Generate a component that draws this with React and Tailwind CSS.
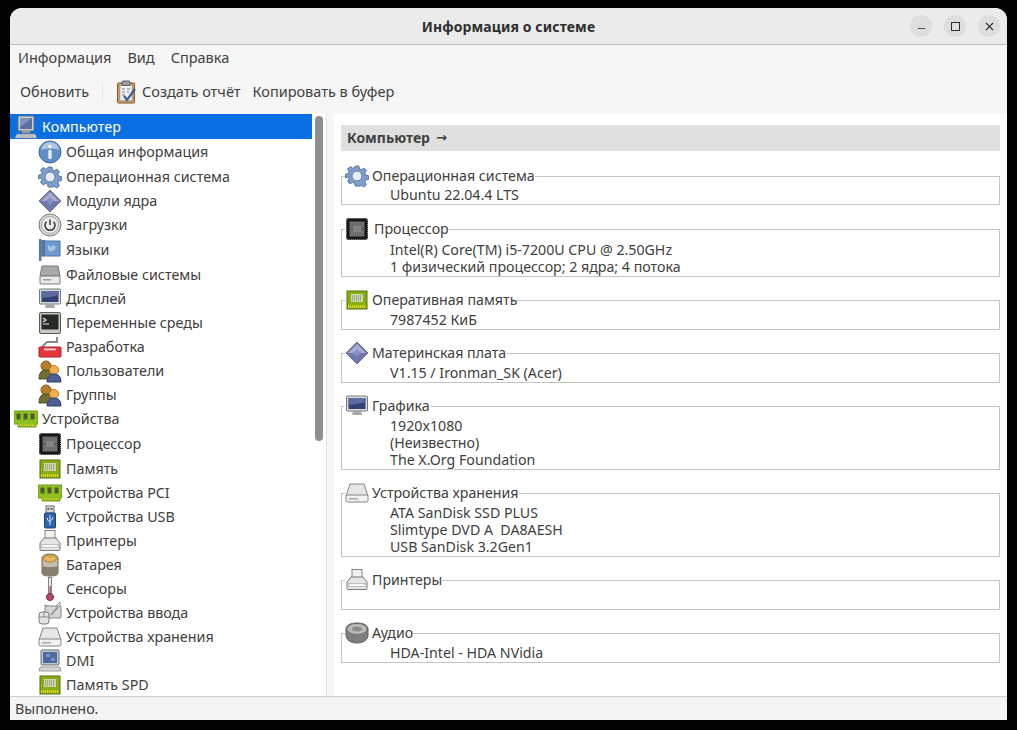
import { Minus, X } from "lucide-react";

const Computer = () => (
  <svg viewBox="0 0 24 24" className="w-6 h-6">
    <rect x="4" y="1" width="16" height="15" rx="1" fill="#c9ccd0" stroke="#6b6f73" />
    <rect x="6" y="3" width="12" height="11" fill="#5b6f9e" />
    <path d="M6 3h12L6 12z" fill="#8093bd" />
    <rect x="8" y="16" width="8" height="2" fill="#9a9d9f" />
    <path d="M3 19h18l2 4H1z" fill="#d6d7d3" stroke="#85878a" strokeWidth=".8" />
    <path d="M4 21h16" stroke="#9a9c9e" strokeWidth=".8" />
  </svg>
);

const Info = () => (
  <svg viewBox="0 0 24 24" className="w-6 h-6">
    <circle cx="12" cy="12" r="11" fill="#5f8ec4" stroke="#3e6a9f" />
    <path d="M3 10a9 8 0 0 1 18 0c-5-2-13-2-18 0z" fill="#a9c6e4" />
    <circle cx="12" cy="6.5" r="2" fill="#e8eff7" />
    <rect x="10.3" y="10" width="3.4" height="9" rx="1" fill="#e8eff7" />
  </svg>
);

const Gear = () => (
  <svg viewBox="0 0 24 24" className="w-6 h-6">
    <path
      d="M10 1h4l.7 3.2 2.1.9 2.8-1.800 2.800 2.800-1.800 2.800.9 2.100 3.200.7v4l-3.200.7-.9 2.100 1.800 2.800-2.800 2.800-2.800-1.800-2.100.9L14 23h-4l-.7-3.200-2.100-.9-2.800 1.800-2.800-2.800 1.800-2.800-.9-2.100L-.700 14v-4l3.200-.7.9-2.100-1.800-2.800 2.800-2.800 2.800 1.800 2.100-.9z"
      transform="translate(1.100 1.100) scale(.91)"
      fill="#7f9fcb"
      stroke="#4c6d9d"
    />
    <circle cx="12" cy="12" r="5" fill="#e9eef5" stroke="#5f7ca8" />
  </svg>
);

const Diamond = () => (
  <svg viewBox="0 0 24 24" className="w-6 h-6">
    <path d="M12 1l11 11-11 11L1 12z" fill="#6f78ae" stroke="#73767f" />
    <path d="M12 3l9 9H3z" fill="#a6acd2" />
    <path d="M12 8l4 4-4 4-4-4z" fill="#8890c0" />
  </svg>
);

const Power = () => (
  <svg viewBox="0 0 24 24" className="w-6 h-6">
    <circle cx="12" cy="12" r="11" fill="#d8d8d6" stroke="#77787a" />
    <circle cx="12" cy="12" r="8.500" fill="#ececea" stroke="#a5a6a6" />
    <path d="M8.500 8.800a5 5 0 1 0 7 0" fill="none" stroke="#333" strokeWidth="1.500" />
    <path d="M12 6.500v5.500" stroke="#333" strokeWidth="1.500" />
  </svg>
);

const Flag = () => (
  <svg viewBox="0 0 24 24" className="w-6 h-6">
    <rect x="1" y="1" width="2.500" height="22" fill="#5c7da5" />
    <path d="M3 3h19v15H3z" fill="#6f9ad0" stroke="#4f7098" />
    <path d="M4 2h3v16H4z" fill="#50749f" />
    <path d="M10 7l3 2 3-2 2 3-3 3-3 1-2-3z" fill="#a7c4e6" />
  </svg>
);

const Drive = () => (
  <svg viewBox="0 0 24 24" className="w-6 h-6">
    <path d="M4 3h16l2 10H2z" fill="#a9a9a7" stroke="#77787a" />
    <rect x="2" y="13" width="20" height="8" rx="1" fill="#e9e9e7" stroke="#77787a" />
    <rect x="5" y="16" width="8" height="1.500" fill="#9a9a98" />
  </svg>
);

const Storage = () => (
  <svg viewBox="0 0 24 24" className="w-6 h-6">
    <path d="M5 3h14l4 12H1z" fill="#e6e6e4" stroke="#85868a" />
    <rect x="1" y="14" width="22" height="7" rx="1.500" fill="#f1f1ef" stroke="#85868a" />
    <rect x="4" y="17" width="9" height="1.500" fill="#a9a9a7" />
  </svg>
);

const Display = () => (
  <svg viewBox="0 0 24 24" className="w-6 h-6">
    <rect x="1.500" y="2" width="21" height="15" rx="1" fill="#d9dade" stroke="#76787c" />
    <rect x="3.500" y="4" width="17" height="11" fill="#34406f" />
    <path d="M3.500 4h17v4c-6 2-11 2-17 3z" fill="#5c6ba0" />
    <path d="M8 17h8l1 4H7z" fill="#a7a8aa" />
  </svg>
);

const Terminal = () => (
  <svg viewBox="0 0 24 24" className="w-6 h-6">
    <rect x="1.500" y="1.500" width="21" height="21" rx="1.500" fill="#c7c8c2" stroke="#595b55" />
    <rect x="3.500" y="3.500" width="17" height="15" fill="#272b27" />
    <path d="M5 7l3 2-3 2M5 13h6" fill="none" stroke="#e8e8e8" strokeWidth="1.200" />
  </svg>
);

const Dev = () => (
  <svg viewBox="0 0 24 24" className="w-6 h-6">
    <path d="M4 12l5-5h10V2" fill="none" stroke="#8b8b8b" strokeWidth="2" />
    <rect x="1" y="12" width="22" height="10" rx="1" fill="#e8353d" stroke="#a92229" />
    <rect x="6" y="13.500" width="12" height="1.800" fill="#f6d5d5" />
  </svg>
);

const Users = () => (
  <svg viewBox="0 0 24 24" className="w-6 h-6">
    <circle cx="8" cy="7" r="5" fill="#b97c2a" stroke="#7e5a22" />
    <path d="M1 20c0-7 3-9 7-9s7 2 7 9z" fill="#6f6f34" stroke="#4e4e25" />
    <circle cx="16" cy="11" r="4.500" fill="#f2b14a" stroke="#b97c2a" />
    <path d="M9 23c0-6 3-8 7-8s7 2 7 8z" fill="#4d5f94" stroke="#33416d" />
  </svg>
);

const Pci = () => (
  <svg viewBox="0 0 24 24" className="w-6 h-6">
    <path d="M0 4h24v13h-2v3H4v-3H0z" fill="#8cc21f" stroke="#6f9a1d" />
    <rect x="2.500" y="6.500" width="4" height="6" fill="#4d5a2a" />
    <rect x="9.500" y="6.500" width="4" height="6" fill="#4d5a2a" />
    <rect x="16.500" y="6.500" width="4" height="6" fill="#4d5a2a" />
    <path d="M4 18h18" stroke="#d8c52c" strokeWidth="2" strokeDasharray="1 1" />
  </svg>
);

const Memory = () => (
  <svg viewBox="0 0 24 24" className="w-6 h-6">
    <rect x="2" y="3" width="20" height="18" fill="#86ae10" stroke="#56700f" />
    <rect x="6" y="6" width="12" height="8" fill="#cfd6b4" />
    <path d="M7 8h10M7 10h10M7 12h10" stroke="#6f7e48" strokeDasharray="1 1" />
    <path d="M3 18.500h18" stroke="#e6cf1e" strokeWidth="3" strokeDasharray="1.200 .8" />
  </svg>
);

const Cpu = () => (
  <svg viewBox="0 0 24 24" className="w-6 h-6">
    <rect x="1" y="1" width="22" height="22" rx="3" fill="#161616" />
    <rect x="1.500" y="1.500" width="21" height="21" rx="3" fill="none" stroke="#a8a8a8" strokeDasharray="1 1" />
    <rect x="4.500" y="4.500" width="15" height="15" fill="#6e6e6e" />
    <path d="M4.500 12h15" stroke="#4d4d4d" />
    <path d="M8 9h8v6H8z" fill="#838383" />
  </svg>
);

const Usb = () => (
  <svg viewBox="0 0 24 24" className="w-6 h-6">
    <rect x="8" y="1" width="8" height="7" fill="#d5d6d8" stroke="#6d6e70" />
    <rect x="9.500" y="3" width="1.800" height="1.800" fill="#555" />
    <rect x="12.700" y="3" width="1.800" height="1.800" fill="#555" />
    <rect x="6.500" y="8" width="11" height="15" rx="1" fill="#2d64ad" stroke="#1d4379" />
    <path d="M12 10v10M9.500 13v2l2.500 2M14.500 12v2l-2.500 2" fill="none" stroke="#dce8f7" />
  </svg>
);

const Printer = () => (
  <svg viewBox="0 0 24 24" className="w-6 h-6">
    <rect x="7" y="1.500" width="10" height="8" fill="#f1f1ef" stroke="#85868a" />
    <path d="M6 9h12l4 5v6.500a1 1 0 0 1-1 1H3a1 1 0 0 1-1-1V14z" fill="#e4e4e2" stroke="#77787a" />
    <rect x="4" y="15.500" width="16" height="3" fill="#f7f7f6" stroke="#a5a6a8" strokeWidth=".6" />
  </svg>
);

const Battery = () => (
  <svg viewBox="0 0 24 24" className="w-6 h-6">
    <path d="M4 5c0-2 3-4 8-4s8 2 8 4v15c0 2-3 3-8 3s-8-1-8-3z" fill="#c4bda9" stroke="#6c6354" />
    <path d="M4 13c3 1.500 13 1.500 16 0v7c0 2-3 3-8 3s-8-1-8-3z" fill="#85816f" />
    <ellipse cx="12" cy="5.500" rx="6.500" ry="3.500" fill="#e6b95a" stroke="#a78432" />
    <rect x="10" y="1.500" width="4" height="3" rx="1" fill="#d39f39" />
  </svg>
);

const Thermometer = () => (
  <svg viewBox="0 0 24 24" className="w-6 h-6">
    <rect x="10.500" y="0.500" width="3" height="18" fill="#e9e9e9" stroke="#6a6a6a" strokeWidth=".8" />
    <rect x="11.500" y="9" width="1.200" height="10" fill="#b03a55" />
    <circle cx="12" cy="20" r="3.500" fill="#b9486a" stroke="#7d2c45" />
  </svg>
);

const Input = () => (
  <svg viewBox="0 0 24 24" className="w-6 h-6">
    <path d="M6 4l10 3h6V1l-4 4" fill="none" stroke="#8c8c8c" />
    <rect x="7" y="5" width="16" height="12" rx="1" fill="#d6d6d4" stroke="#85868a" />
    <path d="M13 14l7-8" stroke="#8c8c8c" strokeWidth="1.500" />
    <rect x="1" y="11" width="10" height="12" rx="3" fill="#e4e4e2" stroke="#77787a" />
    <path d="M6 11v5M1 16h10" stroke="#8c8c8c" />
  </svg>
);

const Dmi = () => (
  <svg viewBox="0 0 24 24" className="w-6 h-6">
    <rect x="3" y="1" width="18" height="15" rx="1" fill="#c5c8cc" stroke="#6b6f73" />
    <rect x="5" y="3" width="14" height="11" fill="#4d689f" />
    <path d="M8 5h4v3H8zM13 9h4v3h-4z" fill="#7d95c4" />
    <path d="M2 18h20l1 4H1z" fill="#d6d7d3" stroke="#85878a" strokeWidth=".8" />
  </svg>
);

const Audio = () => (
  <svg viewBox="0 0 24 24" className="w-6 h-6">
    <path d="M1 8c0-4 5-6 11-6s11 2 11 6v6c0 5-5 8-11 8S1 19 1 14z" fill="#7d7d7b" stroke="#5f5f5e" />
    <ellipse cx="12" cy="8" rx="9.500" ry="5" fill="#b9b9b7" />
    <ellipse cx="12" cy="8" rx="5" ry="2.500" fill="#8c8c8a" />
  </svg>
);

const Report = () => (
  <svg viewBox="0 0 24 24" className="w-6 h-6">
    <rect x="2.500" y="3" width="17" height="20" rx="1" fill="#c99a5d" stroke="#7c5b30" />
    <rect x="5" y="5.500" width="12" height="15" fill="#eef0f2" stroke="#9a9ea2" strokeWidth=".6" />
    <rect x="7" y="1" width="8" height="4.500" rx="1" fill="#9a9c9e" stroke="#5f6163" />
    <path d="M7 9h3M7 12h3M7 15h3M12 9h3M12 12h2" stroke="#7a7e86" />
    <path d="M9 16l3 4 8-11" fill="none" stroke="#3d5f98" strokeWidth="2.200" />
  </svg>
);

const TREE = [
  { label: "Общая информация", icon: Info, low: true },
  { label: "Операционная система", icon: Gear, low: true },
  { label: "Модули ядра", icon: Diamond },
  { label: "Загрузки", icon: Power },
  { label: "Языки", icon: Flag, low: true },
  { label: "Файловые системы", icon: Drive, low: true },
  { label: "Дисплей", icon: Display },
  { label: "Переменные среды", icon: Terminal },
  { label: "Разработка", icon: Dev },
  { label: "Пользователи", icon: Users },
  { label: "Группы", icon: Users },
  { label: "Устройства", icon: Pci, root: true },
  { label: "Процессор", icon: Cpu, low: true },
  { label: "Память", icon: Memory, low: true },
  { label: "Устройства PCI", icon: Pci },
  { label: "Устройства USB", icon: Usb },
  { label: "Принтеры", icon: Printer },
  { label: "Батарея", icon: Battery },
  { label: "Сенсоры", icon: Thermometer },
  { label: "Устройства ввода", icon: Input },
  { label: "Устройства хранения", icon: Storage },
  { label: "DMI", icon: Dmi },
  { label: "Память SPD", icon: Memory },
];

const GROUPS = [
  { title: "Операционная система", icon: Gear, box: "mb-[1px]", body: "h-4 leading-[14px]", lines: ["Ubuntu 22.04.4 LTS"] },
  {
    title: "Процессор",
    icon: Cpu,
    titleGap: "ml-[5px]",
    body: "pb-[1px] leading-[17px]",
    lines: ["Intel(R) Core(TM) i5-7200U CPU @ 2.50GHz", "1 физический процессор; 2 ядра; 4 потока"],
  },
  { title: "Оперативная память", icon: Memory, lines: ["7987452 КиБ"] },
  { title: "Материнская плата", icon: Diamond, lines: ["V1.15 / Ironman_SK (Acer)"] },
  { title: "Графика", icon: Display, lines: ["1920x1080", "(Неизвестно)", "The X.Org Foundation"] },
  {
    title: "Устройства хранения",
    icon: Storage,
    lines: ["ATA SanDisk SSD PLUS", "Slimtype DVD A\u00a0\u00a0DA8AESH", "USB SanDisk 3.2Gen1"],
  },
  { title: "Принтеры", icon: Printer, lines: ["\u00a0"] },
  { title: "Аудио", icon: Audio, lines: ["HDA-Intel - HDA NVidia"] },
];

function Group({ group }) {
  const Icon = group.icon;
  return (
    <fieldset className={`border border-[#c4c4c2] min-w-0 ${group.box || ""}`}>
      <legend className="ml-[3px] flex items-center h-6 bg-white">
        <Icon />
        <span className={group.titleGap || "ml-[3px]"}>{group.title}</span>
      </legend>
      <div className={`pl-[48px] ${group.body || "-mt-[1px] pb-[1px] leading-[17px]"}`}>
        {group.lines.map((line) => (
          <div key={line} className="whitespace-pre">{line}</div>
        ))}
      </div>
    </fieldset>
  );
}

export default function App() {
  return (
    <div className="w-[1017px] h-[730px] bg-black pt-2 pl-2.5 overflow-hidden text-[14.3px] text-[#404040] font-['Noto_Sans',sans-serif]">
      <div className="w-[997px] h-[712px] flex flex-col rounded-t-[12px] overflow-hidden bg-[#f6f6f6]">
        <header className="relative h-[37px] shrink-0 flex items-center justify-center bg-[#ebebeb] border-b border-[#bcbcbc]">
          <h1 className="font-bold text-[14px] text-[#2e2e2e] tracking-[0.1px]">Информация о системе</h1>
          <div className="absolute right-[7px] top-[7px] flex gap-3">
            <button className="w-[22px] h-[22px] rounded-full bg-[#dedede] flex items-center justify-center text-[#2e2e2e]">
              <Minus size={11} strokeWidth={1.8} className="translate-y-[2px]" />
            </button>
            <button className="w-[22px] h-[22px] rounded-full bg-[#dedede] flex items-center justify-center">
              <span className="w-[9px] h-[9px] border border-[#2e2e2e]" />
            </button>
            <button className="w-[22px] h-[22px] rounded-full bg-[#dedede] flex items-center justify-center text-[#2e2e2e]">
              <X size={13} strokeWidth={2} />
            </button>
          </div>
        </header>

        <nav className="h-[26px] shrink-0 flex items-center gap-4 pl-2 pb-[1px] bg-[#f6f6f6] text-[14.5px]">
          <span>Информация</span>
          <span>Вид</span>
          <span>Справка</span>
        </nav>

        <div className="h-[43px] shrink-0 flex items-center bg-[#f6f6f6] pl-[10px] pb-[2px] text-[14.5px]">
          <span>Обновить</span>
          <span className="w-px h-5 bg-[#e6e6e6] ml-[13px] mr-[12px]" />
          <Report />
          <span className="ml-[3px]">Создать отчёт</span>
          <span className="ml-3">Копировать в буфер</span>
        </div>

        <div className="flex-1 min-h-0 flex">
          <aside className="relative w-[317px] shrink-0 bg-white border-r border-[#e2e2e2] overflow-hidden">
            <div className="h-[25px] flex items-center pl-[4px] gap-1 pt-[1px] mr-[14px] bg-[#0a6fe2] text-white">
              <Computer />
              <span>Компьютер</span>
            </div>
            {TREE.map((item) => {
              const Icon = item.icon;
              return (
                <div
                  key={item.label + (item.root ? "-root" : "")}
                  className={`flex items-center gap-1 h-6 ${item.low ? "mt-[1px]" : ""} ${item.root ? "pl-[4px]" : "pl-[28px]"}`}
                >
                  <Icon />
                  <span>{item.label}</span>
                </div>
              );
            })}
            <div className="absolute left-[305px] top-[2px] w-2 h-[325px] rounded-full bg-[#8f8f8f]" />
          </aside>

          <div className="w-[7px] shrink-0 bg-[#f6f6f6]" />

          <main className="flex-1 min-w-0 bg-white pt-[11px] pl-[7px] pr-[7px] text-[14.2px]">
            <div className="h-[26px] flex items-center pl-[6px] pb-[1px] bg-[#e0e0e0] font-bold text-[14px]">
              Компьютер <span className="ml-[6px] font-['DejaVu_Sans',sans-serif] text-[13px]">→</span>
            </div>
            <div className="mt-[13px] flex flex-col gap-[11px]">
              {GROUPS.map((group) => (
                <Group key={group.title} group={group} />
              ))}
            </div>
          </main>
        </div>

        <footer className="h-[24px] shrink-0 flex items-center pl-[5px] bg-[#f4f4f4] border-t border-[#d0d0d0]">
          Выполнено.
        </footer>
      </div>
    </div>
  );
}
